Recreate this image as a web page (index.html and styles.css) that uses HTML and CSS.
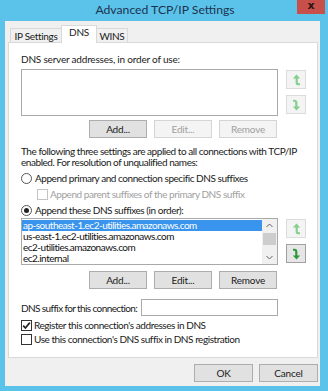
FILE: index.html
```html
<!DOCTYPE html>
<html>
<head>
<meta charset="utf-8">
<link rel="stylesheet" href="styles.css">
</head>
<body>
<div class="window">
  <div class="titlebar">
    <span></span>
    <span class="title">Advanced TCP/IP Settings</span>
    <span class="close-wrap"><span class="close">x</span></span>
  </div>
  <div class="client">
    <div class="tabs">
      <span class="tab t1">IP Settings</span>
      <span class="tab active">DNS</span>
      <span class="tab t3">WINS</span>
    </div>
    <div class="panel">
      <div class="label lbl1">DNS server addresses, in order of use:</div>
      <div class="listrow">
        <div class="list list1"></div>
        <div class="arrows arrows1">
          <span class="abtn disabled"><svg width="9" height="12" viewBox="0 0 9 12"><path d="M4.5 0.5 L8.2 4.5 H5.8 V8.2 Q5.8 9.3 7 9.3 H8 V11.3 H6.6 Q3.6 11.3 3.6 8.4 V4.5 H0.8 Z" fill="#86cf8e"/></svg></span>
          <span class="abtn disabled"><svg width="9" height="12" viewBox="0 0 9 12"><g transform="rotate(180 4.5 6)"><path d="M4.5 0.5 L8.2 4.5 H5.8 V8.2 Q5.8 9.3 7 9.3 H8 V11.3 H6.6 Q3.6 11.3 3.6 8.4 V4.5 H0.8 Z" fill="#86cf8e"/></g></svg></span>
        </div>
      </div>
      <div class="btnrow">
        <span class="btn">Add...</span>
        <span class="btn disabled">Edit...</span>
        <span class="btn disabled">Remove</span>
      </div>
      <p class="para">The following three settings are applied to all connections with TCP/IP<br>enabled. For resolution of unqualified names:</p>
      <div class="opt radio-row r1"><span class="radio"></span>Append primary and connection specific DNS suffixes</div>
      <div class="opt sub dim"><span class="check disabled"></span>Append parent suffixes of the primary DNS suffix</div>
      <div class="opt radio-row r2"><span class="radio on"></span>Append these DNS suffixes (in order):</div>
      <div class="listrow lr2">
        <div class="list list2">
          <div class="items">
            <div class="item sel">ap-southeast-1.ec2-utilities.amazonaws.com</div>
            <div class="item">us-east-1.ec2-utilities.amazonaws.com</div>
            <div class="item">ec2-utilities.amazonaws.com</div>
            <div class="item">ec2.internal</div>
          </div>
          <div class="scrollbar">
            <span class="sarrow"><svg width="7" height="5" viewBox="0 0 7 5"><path d="M0.5 4 L3.5 1 L6.5 4" fill="none" stroke="#606060" stroke-width="1"/></svg></span>
            <span class="thumb"></span>
            <span class="strack"></span>
            <span class="sarrow"><svg width="7" height="5" viewBox="0 0 7 5"><path d="M0.5 1 L3.5 4 L6.5 1" fill="none" stroke="#606060" stroke-width="1"/></svg></span>
          </div>
        </div>
        <div class="arrows arrows2">
          <span class="abtn disabled"><svg width="9" height="12" viewBox="0 0 9 12"><path d="M4.5 0.5 L8.2 4.5 H5.8 V8.2 Q5.8 9.3 7 9.3 H8 V11.3 H6.6 Q3.6 11.3 3.6 8.4 V4.5 H0.8 Z" fill="#86cf8e"/></svg></span>
          <span class="abtn enabled"><svg width="9" height="12" viewBox="0 0 9 12"><g transform="rotate(180 4.5 6)"><path d="M4.5 0.5 L8.2 4.5 H5.8 V8.2 Q5.8 9.3 7 9.3 H8 V11.3 H6.6 Q3.6 11.3 3.6 8.4 V4.5 H0.8 Z" fill="#2d9a3c"/></g></svg></span>
        </div>
      </div>
      <div class="btnrow br2">
        <span class="btn">Add...</span>
        <span class="btn">Edit...</span>
        <span class="btn">Remove</span>
      </div>
      <div class="suffixrow">
        <span class="suffixlabel">DNS suffix for this connection:</span>
        <span class="input"></span>
      </div>
      <div class="opt c1"><span class="check on"><svg width="9" height="9" viewBox="0 0 9 9"><path d="M1.2 4.6 L3.4 7 L7.8 1.6" fill="none" stroke="#222" stroke-width="1.7"/></svg></span>Register this connection's addresses in DNS</div>
      <div class="opt c2"><span class="check"></span>Use this connection's DNS suffix in DNS registration</div>
    </div>
    <div class="footer">
      <span class="btn fbtn">OK</span>
      <span class="btn fbtn">Cancel</span>
    </div>
  </div>
</div>
</body>
</html>
```
FILE: styles.css
```css
* { box-sizing: border-box; }
html, body { margin: 0; padding: 0; }
body {
  font-family: Lato, "Liberation Sans", sans-serif;
  font-size: 10px;
  letter-spacing: -0.45px;
  color: #1a1a1a;
  background: #5bc3e9;
}
.window {
  width: 328px;
  height: 391px;
  background: #5bc3e9;
  display: flex;
  flex-direction: column;
  overflow: hidden;
}
.titlebar {
  height: 21px;
  flex: none;
  display: grid;
  grid-template-columns: 1fr auto 1fr;
  align-items: start;
}
.title {
  font-size: 12.2px;
  letter-spacing: 0;
  color: #1c3350;
  line-height: 20px;
  padding-left: 2px;
  white-space: nowrap;
}
.close-wrap { display: flex; justify-content: flex-end; padding-right: 3px; }
.close {
  width: 28px;
  height: 14px;
  background: #c9504a;
  color: #2a1515;
  font-weight: bold;
  font-size: 11px;
  letter-spacing: 0;
  line-height: 12px;
  text-align: center;
  font-family: "DejaVu Sans", sans-serif;
}
.client {
  flex: 1;
  margin: 0 8px 5px 5px;
  background: #f0f0f0;
  padding: 6px 2px 0 3px;
  display: flex;
  flex-direction: column;
}
.tabs {
  display: flex;
  align-items: flex-end;
  height: 15px;
  padding-left: 2px;
  position: relative;
  z-index: 1;
  white-space: nowrap;
}
.tab {
  height: 14px;
  border: 1px solid #d9d9d9;
  border-bottom: none;
  background: #f0f0f0;
  line-height: 14px;
  margin-right: -1px;
  text-align: center;
  letter-spacing: -0.3px;
}
.t1 { width: 52px; }
.tab.active {
  background: #fff;
  width: 36px;
  margin-bottom: -1px;
  height: 18px;
  line-height: 12px;
}
.t3 { width: 32px; }
.panel {
  background: #fff;
  border: 1px solid #d9d9d9;
  height: 316px;
  flex: none;
  padding: 10px 0 0 12px;
  display: flex;
  flex-direction: column;
}
.label { line-height: 13px; white-space: nowrap; letter-spacing: -0.2px; }
.listrow {
  display: flex;
  margin-top: 3px;
  gap: 8px;
}
.list {
  width: 257px;
  height: 47px;
  border: 1px solid #a9a9a9;
  background: #fff;
  flex: none;
}
.arrows {
  display: flex;
  flex-direction: column;
  gap: 6px;
  padding-top: 1px;
}
.abtn {
  width: 20px;
  height: 19px;
  border: 1px solid #dcdcdc;
  background: #f4f4f4;
  display: flex;
  align-items: center;
  justify-content: center;
}
.abtn.enabled {
  border-color: #a0a0a0;
  background: #e6e6e6;
}
.btnrow {
  display: flex;
  gap: 7px;
  margin-top: 4px;
  padding-left: 68px;
}
.btn {
  width: 58px;
  height: 18px;
  border: 1px solid #adadad;
  background: #e1e1e1;
  text-align: center;
  line-height: 16px;
  white-space: nowrap;
  letter-spacing: -0.2px;
}
.btn.disabled {
  border-color: #d5d5d5;
  background: #f4f4f4;
  color: #a0a0a0;
}
.para {
  margin: 8px 0 0 0;
  line-height: 11px;
  white-space: nowrap;
}
.opt {
  display: flex;
  align-items: center;
  line-height: 13px;
  white-space: nowrap;
}
.r1 { margin-top: 4px; }
.sub { margin-top: 3px; padding-left: 16px; }
.r2 { margin-top: 3px; }
.dim { color: #a0a0a0; }
.radio {
  width: 11px;
  height: 11px;
  border: 1px solid #555;
  border-radius: 50%;
  margin-right: 3px;
  background: #fff;
  display: flex;
  align-items: center;
  justify-content: center;
}
.radio.on::after {
  content: "";
  width: 5px;
  height: 5px;
  border-radius: 50%;
  background: #222;
}
.check {
  width: 11px;
  height: 11px;
  border: 1px solid #333;
  margin-right: 2px;
  background: #fff;
  display: flex;
  align-items: center;
  justify-content: center;
}
.check.disabled { border-color: #c4c4c4; }
.lr2 { margin-top: 1px; }
.list2 {
  height: 47px;
  display: flex;
}
.items { flex: 1; padding-top: 1px; overflow: hidden; }
.item {
  height: 11px;
  line-height: 11px;
  padding-left: 1px;
  font-size: 10px;
  letter-spacing: -0.5px;
  color: #111;
  white-space: nowrap;
}
.item.sel { background: #3894ec; color: #fff; }
.scrollbar {
  width: 15px;
  background: #f0f0f0;
  display: flex;
  flex-direction: column;
}
.sarrow {
  height: 13px;
  display: flex;
  align-items: center;
  justify-content: center;
}
.thumb { height: 12px; margin: 1px 1px 0 1px; background: #cdcdcd; }
.strack { flex: 1; }
.br2 { margin-top: 6px; }
.suffixrow {
  display: flex;
  align-items: center;
  gap: 4px;
  margin-top: 10px;
  white-space: nowrap;
}
.suffixlabel { letter-spacing: -0.6px; }
.input {
  width: 137px;
  height: 17px;
  border: 1px solid #a9a9a9;
  background: #fff;
}
.c1 { margin-top: 3px; }
.c2 { margin-top: 1px; }
.footer {
  display: flex;
  justify-content: flex-end;
  gap: 6px;
  padding: 6px 0 0 0;
}
.fbtn { width: 59px; }
```
